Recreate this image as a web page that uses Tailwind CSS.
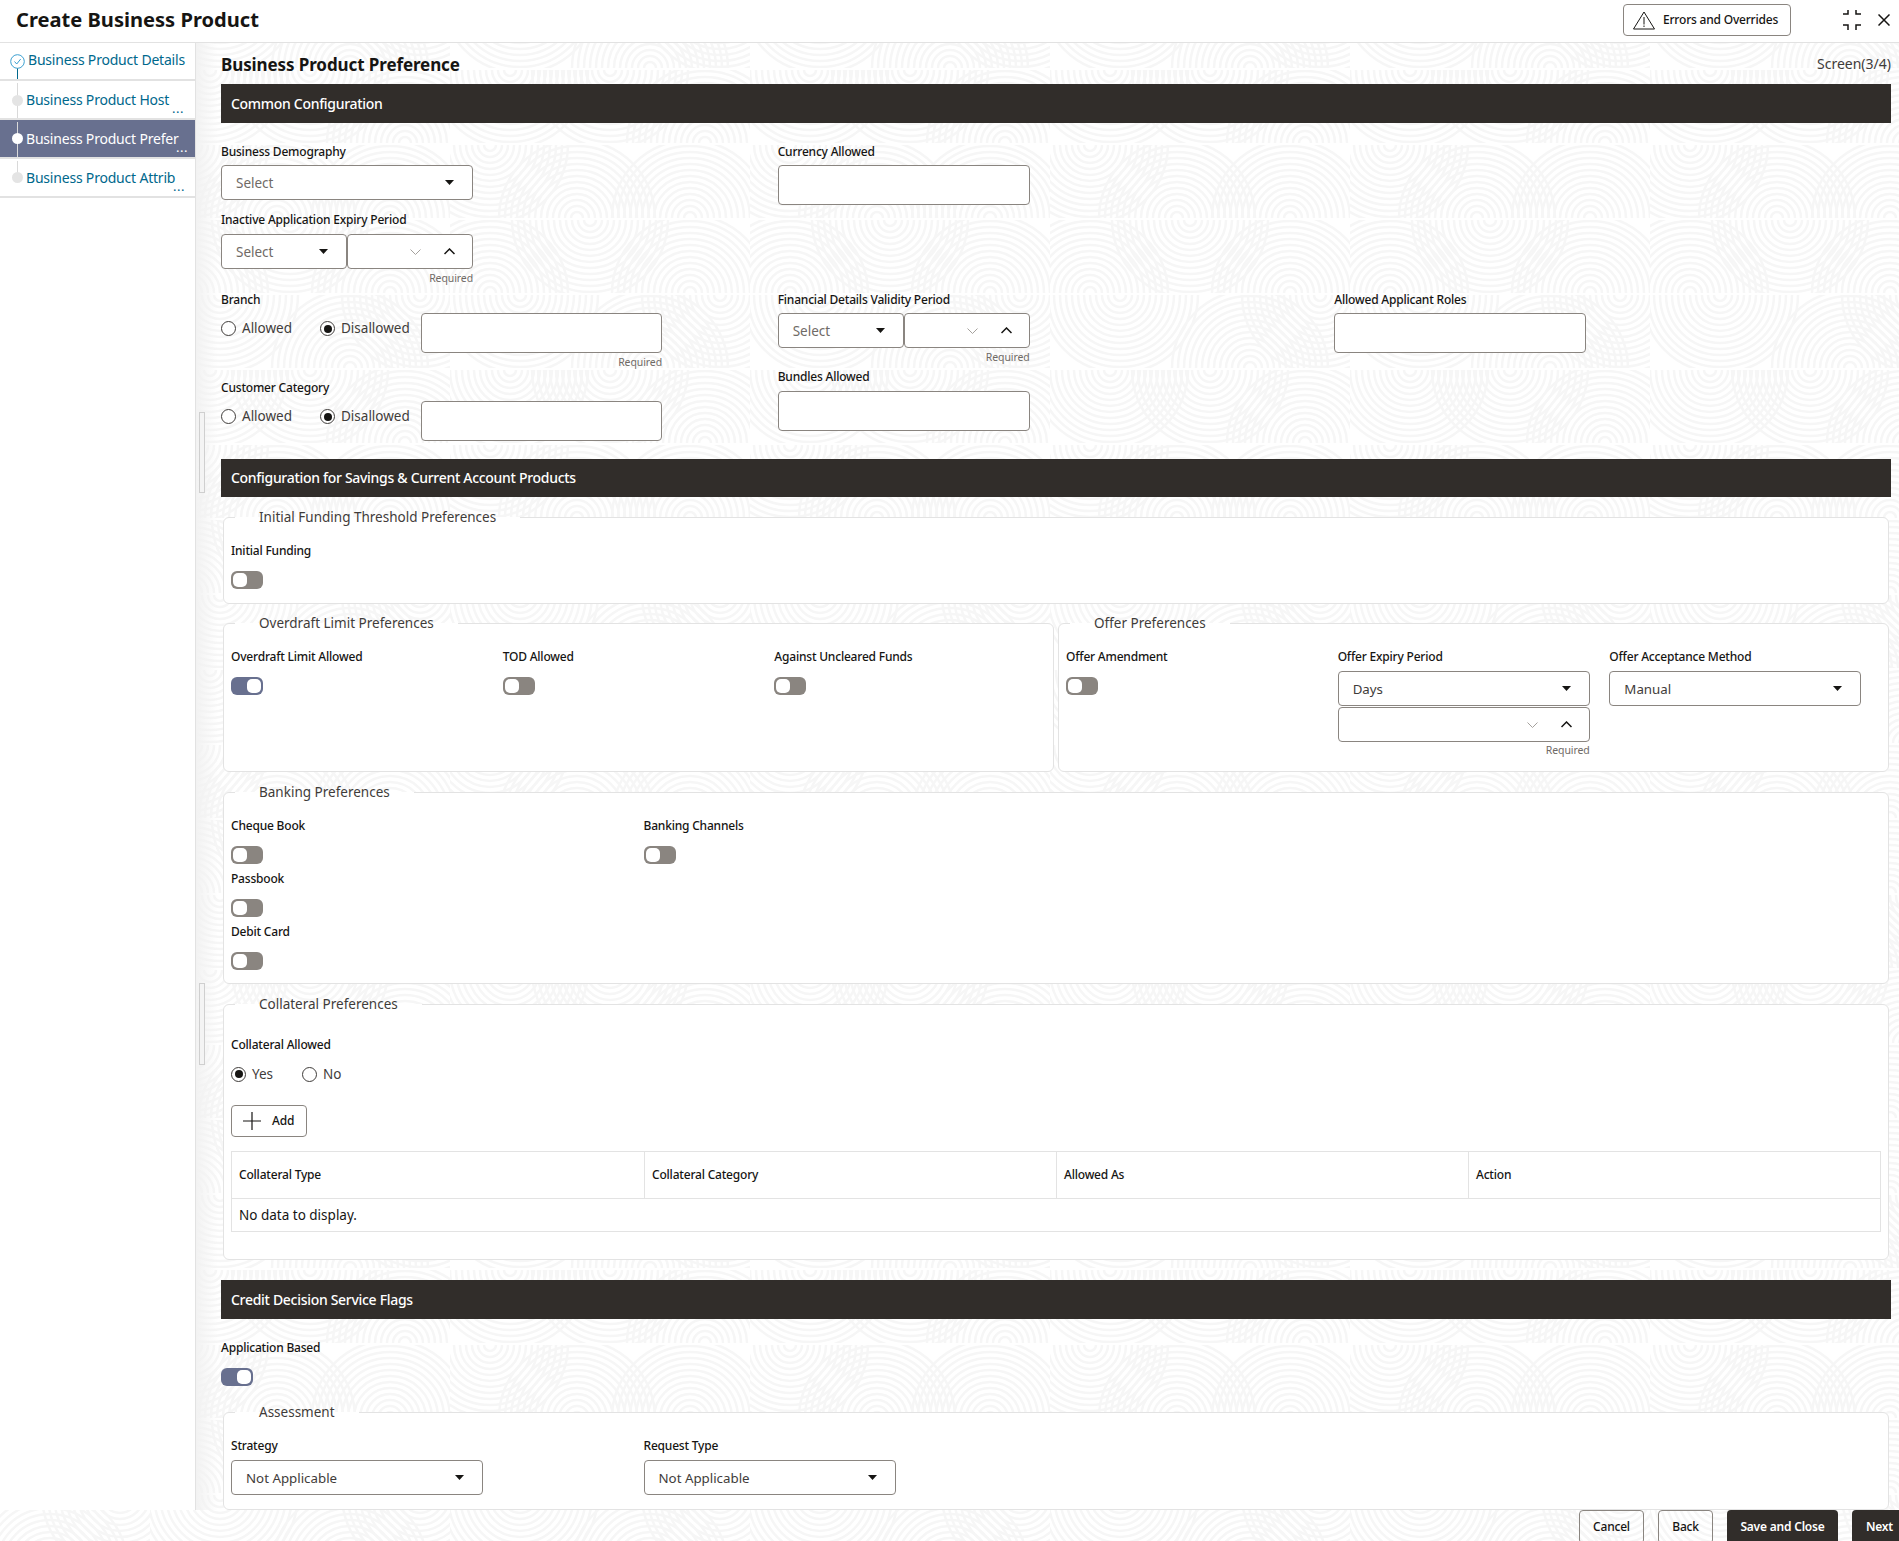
<!DOCTYPE html>
<html lang="en">
  <head>
    <meta charset="UTF-8" />
    <title>Create Business Product</title>
    <script src="https://cdn.jsdelivr.net/npm/@tailwindcss/browser@4"></script>
  </head>
  <body class="bg-white">
    <div class="relative flex h-[1541px] w-full flex-col overflow-hidden bg-white font-['Noto_Sans',sans-serif] text-[#161513]">
      <!-- background pattern -->
      <svg class="absolute inset-0 h-full w-full" xmlns="http://www.w3.org/2000/svg">
        <defs>
          <pattern id="rings" patternUnits="userSpaceOnUse" x="150" y="145" width="300" height="300"></pattern>
        </defs>
        <rect width="100%" height="100%" fill="url(#rings)"></rect>
      </svg>

      <!-- header -->
      <div class="relative flex h-[43px] shrink-0 items-center justify-between border-b border-[#e2e2e2] bg-white pb-[2px] pl-[16px]">
        <p class="text-[20.1px] font-bold">Create Business Product</p>
        <div class="flex items-center">
          <button class="flex h-[32px] w-[168px] items-center rounded-[4px] border border-[#8a8580] pl-[9px] text-[12px] font-medium tracking-[-0.2px]">
            <svg class="mr-[8px]" width="22" height="19" viewBox="0 0 22 19" fill="none" stroke="#161513" stroke-width="1"><path d="M11 1 21.500 18H.5Z" stroke-linejoin="round" /><path d="M11 6v7.500M11 14.500v1.500" /></svg>
            Errors and Overrides
          </button>
          <svg class="ml-[51px]" width="20" height="20" viewBox="0 0 20 20" fill="none" stroke="#161513" stroke-width="1.500"><path d="M1 4h5V0M19 4h-5V0M1 15h5v5M19 15h-5v5" /></svg>
          <svg class="ml-[16px] mr-[9px]" width="12" height="12" viewBox="0 0 12 12" fill="none" stroke="#161513" stroke-width="1.500"><path d="M.500.500l11 11M11.500.500l-11 11" /></svg>
        </div>
      </div>

      <div class="relative flex h-[1467px] shrink-0">
        <!-- sidebar -->
        <div class="h-full w-[196px] shrink-0 border-r border-[#e2e2e2] bg-white text-[14px] tracking-[-0.2px] text-[#00688c]">
          <div class="relative h-[38px] border-b-2 border-[#e2e2e2]">
            <svg class="absolute left-[10px] top-[11px]" width="15" height="25" viewBox="0 0 15 25" fill="none"><circle cx="7.500" cy="7.500" r="6.800" stroke="#3a9fd0" /><path d="M4.500 7.500l2.200 2.500 4-5" stroke="#3a9fd0" /><path d="M7.500 14.500V25" stroke="#00688c" /></svg>
            <span class="absolute left-[28px] top-[6px] whitespace-nowrap">Business Product Details</span>
          </div>
          <div class="relative h-[39px] border-b-2 border-[#e2e2e2]">
            <div class="absolute bottom-[0px] left-[17px] top-[2px] w-px bg-[#d9d9d9]"></div>
            <div class="absolute left-[12px] top-[14px] size-[11px] rounded-full bg-[#e4e4e4]"></div>
            <span class="absolute left-[26px] top-[8px] whitespace-nowrap">Business Product Host</span>
            <span class="absolute left-[172px] top-[18px] text-[13px] tracking-[0.5px]">...</span>
          </div>
          <div class="relative h-[39px] border-b-2 border-[#e2e2e2] bg-[#68708f] text-white">
            <div class="absolute bottom-[0px] left-[17px] top-[2px] w-px bg-[#d9d9d9]"></div>
            <div class="absolute left-[12px] top-[13px] size-[11px] rounded-full bg-white"></div>
            <span class="absolute left-[26px] top-[8px] whitespace-nowrap">Business Product Prefer</span>
            <span class="absolute left-[176px] top-[18px] text-[13px] tracking-[0.5px]">...</span>
          </div>
          <div class="relative h-[39px] border-b-2 border-[#e2e2e2]">
            <div class="absolute bottom-[16px] left-[17px] top-[2px] w-px bg-[#d9d9d9]"></div>
            <div class="absolute left-[12px] top-[13px] size-[11px] rounded-full bg-[#e4e4e4]"></div>
            <span class="absolute left-[26px] top-[8px] whitespace-nowrap">Business Product Attrib</span>
            <span class="absolute left-[173px] top-[18px] text-[13px] tracking-[0.5px]">...</span>
          </div>
        </div>

        <!-- main -->
        <div class="relative min-w-0 flex-1 overflow-hidden pl-[25px] pr-[8px]">
          <div class="absolute inset-y-0 left-0 w-[22px] bg-gradient-to-r from-[#f2f2f2] to-transparent"></div>
          <div class="absolute left-[3px] top-[369px] h-[81px] w-[6px] border border-[#cfcfcf] bg-[#f4f4f4]"></div>
          <div class="absolute left-[3px] top-[940px] h-[82px] w-[6px] border border-[#cfcfcf] bg-[#f4f4f4]"></div>

          <div class="relative">
            <div class="flex h-[41px] items-center justify-between">
              <p class="pt-[3px] text-[17px] font-bold tracking-[-0.1px]">Business Product Preference</p>
              <p class="text-[14px] text-[#3f3c3a]">Screen(3/4)</p>
            </div>

            <!-- common configuration -->
            <div class="flex h-[39px] items-center bg-[#312d2a] pl-[10px] text-[14px] font-medium tracking-[-0.3px] text-white">Common Configuration</div>
            <div class="grid h-[336px] grid-cols-3">
              <div class="relative pt-[20px]">
                <label class="block h-[18px] text-[12px] font-medium leading-[18px] tracking-[-0.2px]">Business Demography</label>
                <div class="mt-[4px] flex h-[35px] w-[252px] items-center justify-between rounded-[4px] border border-[#8a8580] bg-white pl-[14px] pr-[18px] pt-[2px] text-[13.5px] text-[#6f6a66]">
                  Select
                  <svg class="mb-[2px]" width="9" height="5" viewBox="0 0 9 5"><path d="M0 0h9L4.500 5Z" fill="#161513" /></svg>
                </div>
                <label class="mt-[11px] block h-[18px] text-[12px] font-medium leading-[18px] tracking-[-0.2px]">Inactive Application Expiry Period</label>
                <div class="mt-[5px] flex w-[252px]">
                  <div class="flex h-[35px] w-[126px] items-center justify-between rounded-[4px] border border-[#8a8580] bg-white pl-[14px] pr-[18px] pt-[2px] text-[13.5px] text-[#6f6a66]">
                    Select
                    <svg class="mb-[2px]" width="9" height="5" viewBox="0 0 9 5"><path d="M0 0h9L4.500 5Z" fill="#161513" /></svg>
                  </div>
                  <div class="flex h-[35px] w-[126px] items-center justify-end rounded-[4px] border border-[#8a8580] bg-white pr-[17px]">
                    <svg width="11" height="6" viewBox="0 0 11 6" fill="none" stroke="#a5a19d"><path d="M.500.500l5 5 5-5" /></svg>
                    <svg class="ml-[23px]" width="11" height="7" viewBox="0 0 11 7" fill="none" stroke="#161513" stroke-width="1.500"><path d="M.500 6l5-5 5 5" /></svg>
                  </div>
                </div>
                <p class="mt-[2px] h-[14px] w-[252px] text-right text-[10.5px] leading-[14px] tracking-[-0.1px] text-[#6f6a66]">Required</p>
                <label class="mt-[6px] block h-[18px] text-[12px] font-medium leading-[18px] tracking-[-0.2px]">Branch</label>
                <div class="mt-[4px] flex items-start text-[13.5px] text-[#3f3c3a]">
                  <div class="flex h-[31px] items-center">
                    <span class="size-[15px] rounded-full border border-[#3f3c3a] bg-white"></span>
                    <span class="ml-[6px] w-[78px]">Allowed</span>
                    <span class="flex size-[15px] items-center justify-center rounded-full border border-[#3f3c3a] bg-white"><span class="size-[8px] rounded-full bg-[#161513]"></span></span>
                    <span class="ml-[6px]">Disallowed</span>
                  </div>
                  <div class="absolute left-[200px] h-[40px] w-[241px] rounded-[4px] border border-[#8a8580] bg-white"></div>
                </div>
                <p class="mt-[11px] h-[14px] w-[441px] text-right text-[10.5px] leading-[14px] tracking-[-0.1px] text-[#6f6a66]">Required</p>
                <label class="mt-[10px] block h-[18px] text-[12px] font-medium leading-[18px] tracking-[-0.2px]">Customer Category</label>
                <div class="mt-[4px] flex items-start text-[13.5px] text-[#3f3c3a]">
                  <div class="flex h-[31px] items-center">
                    <span class="size-[15px] rounded-full border border-[#3f3c3a] bg-white"></span>
                    <span class="ml-[6px] w-[78px]">Allowed</span>
                    <span class="flex size-[15px] items-center justify-center rounded-full border border-[#3f3c3a] bg-white"><span class="size-[8px] rounded-full bg-[#161513]"></span></span>
                    <span class="ml-[6px]">Disallowed</span>
                  </div>
                  <div class="absolute left-[200px] h-[40px] w-[241px] rounded-[4px] border border-[#8a8580] bg-white"></div>
                </div>
              </div>
              <div class="pt-[20px]">
                <label class="block h-[18px] text-[12px] font-medium leading-[18px] tracking-[-0.2px]">Currency Allowed</label>
                <div class="mt-[4px] h-[40px] w-[252px] rounded-[4px] border border-[#8a8580] bg-white"></div>
                <label class="mt-[86px] block h-[18px] text-[12px] font-medium leading-[18px] tracking-[-0.2px]">Financial Details Validity Period</label>
                <div class="mt-[4px] flex w-[252px]">
                  <div class="flex h-[35px] w-[126px] items-center justify-between rounded-[4px] border border-[#8a8580] bg-white pl-[14px] pr-[18px] pt-[2px] text-[13.5px] text-[#6f6a66]">
                    Select
                    <svg class="mb-[2px]" width="9" height="5" viewBox="0 0 9 5"><path d="M0 0h9L4.500 5Z" fill="#161513" /></svg>
                  </div>
                  <div class="flex h-[35px] w-[126px] items-center justify-end rounded-[4px] border border-[#8a8580] bg-white pr-[17px]">
                    <svg width="11" height="6" viewBox="0 0 11 6" fill="none" stroke="#a5a19d"><path d="M.500.500l5 5 5-5" /></svg>
                    <svg class="ml-[23px]" width="11" height="7" viewBox="0 0 11 7" fill="none" stroke="#161513" stroke-width="1.500"><path d="M.500 6l5-5 5 5" /></svg>
                  </div>
                </div>
                <p class="mt-[2px] h-[14px] w-[252px] text-right text-[10.5px] leading-[14px] tracking-[-0.1px] text-[#6f6a66]">Required</p>
                <label class="mt-[4px] block h-[18px] text-[12px] font-medium leading-[18px] tracking-[-0.2px]">Bundles Allowed</label>
                <div class="mt-[5px] h-[40px] w-[252px] rounded-[4px] border border-[#8a8580] bg-white"></div>
              </div>
              <div class="pt-[168px]">
                <label class="block h-[18px] text-[12px] font-medium leading-[18px] tracking-[-0.2px]">Allowed Applicant Roles</label>
                <div class="mt-[4px] h-[40px] w-[252px] rounded-[4px] border border-[#8a8580] bg-white"></div>
              </div>
            </div>

            <!-- savings and current -->
            <div class="flex h-[38px] items-center bg-[#312d2a] pb-[1px] pl-[10px] text-[14px] font-medium tracking-[-0.3px] text-white">Configuration for Savings &amp; Current Account Products</div>

            <fieldset class="mx-[2px] mt-[8px] h-[99px] rounded-[6px] border border-[#e3e3e3] bg-white px-[7px]">
              <legend class="ml-[4px] h-[24px] px-[24px] text-[13.5px] leading-[24px] text-[#3f3c3a]">Initial Funding Threshold Preferences</legend>
              <label class="mt-[13px] block h-[18px] text-[12px] font-medium leading-[18px] tracking-[-0.2px]">Initial Funding</label>
              <div class="mt-[11px] flex h-[18px] w-[32px] items-center rounded-[6px] bg-[#8a8580] px-[2px]"><span class="size-[14px] rounded-[5px] bg-white"></span></div>
            </fieldset>

            <div class="mx-[2px] mt-[7px] grid grid-cols-2 gap-[4px]">
              <fieldset class="h-[161px] rounded-[6px] border border-[#e3e3e3] bg-white px-[7px]">
                <legend class="ml-[4px] h-[24px] px-[24px] text-[13.5px] leading-[24px] text-[#3f3c3a]">Overdraft Limit Preferences</legend>
                <div class="grid grid-cols-3">
                  <div>
                    <label class="mt-[13px] block h-[18px] text-[12px] font-medium leading-[18px] tracking-[-0.2px]">Overdraft Limit Allowed</label>
                    <div class="mt-[11px] flex h-[18px] w-[32px] items-center justify-end rounded-[6px] bg-[#68708f] px-[2px]"><span class="size-[14px] rounded-[5px] bg-white"></span></div>
                  </div>
                  <div>
                    <label class="mt-[13px] block h-[18px] text-[12px] font-medium leading-[18px] tracking-[-0.2px]">TOD Allowed</label>
                    <div class="mt-[11px] flex h-[18px] w-[32px] items-center rounded-[6px] bg-[#8a8580] px-[2px]"><span class="size-[14px] rounded-[5px] bg-white"></span></div>
                  </div>
                  <div>
                    <label class="mt-[13px] block h-[18px] text-[12px] font-medium leading-[18px] tracking-[-0.2px]">Against Uncleared Funds</label>
                    <div class="mt-[11px] flex h-[18px] w-[32px] items-center rounded-[6px] bg-[#8a8580] px-[2px]"><span class="size-[14px] rounded-[5px] bg-white"></span></div>
                  </div>
                </div>
              </fieldset>
              <fieldset class="h-[161px] rounded-[6px] border border-[#e3e3e3] bg-white px-[7px]">
                <legend class="ml-[4px] h-[24px] px-[24px] text-[13.5px] leading-[24px] text-[#3f3c3a]">Offer Preferences</legend>
                <div class="grid grid-cols-3">
                  <div>
                    <label class="mt-[13px] block h-[18px] text-[12px] font-medium leading-[18px] tracking-[-0.2px]">Offer Amendment</label>
                    <div class="mt-[11px] flex h-[18px] w-[32px] items-center rounded-[6px] bg-[#8a8580] px-[2px]"><span class="size-[14px] rounded-[5px] bg-white"></span></div>
                  </div>
                  <div>
                    <label class="mt-[13px] block h-[18px] text-[12px] font-medium leading-[18px] tracking-[-0.2px]">Offer Expiry Period</label>
                    <div class="mt-[5px] flex h-[35px] w-[252px] items-center justify-between rounded-[4px] border border-[#8a8580] bg-white pl-[14px] pr-[18px] pt-[2px] text-[13.3px] text-[#3f3c3a]">
                      Days
                      <svg class="mb-[2px]" width="9" height="5" viewBox="0 0 9 5"><path d="M0 0h9L4.500 5Z" fill="#161513" /></svg>
                    </div>
                    <div class="mt-[1px] flex h-[35px] w-[252px] items-center justify-end rounded-[4px] border border-[#8a8580] bg-white pr-[17px]">
                      <svg width="11" height="6" viewBox="0 0 11 6" fill="none" stroke="#a5a19d"><path d="M.500.500l5 5 5-5" /></svg>
                      <svg class="ml-[23px]" width="11" height="7" viewBox="0 0 11 7" fill="none" stroke="#161513" stroke-width="1.500"><path d="M.500 6l5-5 5 5" /></svg>
                    </div>
                    <p class="mt-[1px] h-[14px] w-[252px] text-right text-[10.5px] leading-[14px] tracking-[-0.1px] text-[#6f6a66]">Required</p>
                  </div>
                  <div>
                    <label class="mt-[13px] block h-[18px] text-[12px] font-medium leading-[18px] tracking-[-0.2px]">Offer Acceptance Method</label>
                    <div class="mt-[5px] flex h-[35px] w-[252px] items-center justify-between rounded-[4px] border border-[#8a8580] bg-white pl-[14px] pr-[18px] pt-[2px] text-[13.3px] text-[#3f3c3a]">
                      Manual
                      <svg class="mb-[2px]" width="9" height="5" viewBox="0 0 9 5"><path d="M0 0h9L4.500 5Z" fill="#161513" /></svg>
                    </div>
                  </div>
                </div>
              </fieldset>
            </div>

            <fieldset class="mx-[2px] mt-[8px] h-[204px] rounded-[6px] border border-[#e3e3e3] bg-white px-[7px]">
              <legend class="ml-[4px] h-[24px] px-[24px] text-[13.5px] leading-[24px] text-[#3f3c3a]">Banking Preferences</legend>
              <div class="grid grid-cols-4">
                <div>
                  <label class="mt-[13px] block h-[18px] text-[12px] font-medium leading-[18px] tracking-[-0.2px]">Cheque Book</label>
                  <div class="mt-[11px] flex h-[18px] w-[32px] items-center rounded-[6px] bg-[#8a8580] px-[2px]"><span class="size-[14px] rounded-[5px] bg-white"></span></div>
                  <label class="mt-[6px] block h-[18px] text-[12px] font-medium leading-[18px] tracking-[-0.2px]">Passbook</label>
                  <div class="mt-[11px] flex h-[18px] w-[32px] items-center rounded-[6px] bg-[#8a8580] px-[2px]"><span class="size-[14px] rounded-[5px] bg-white"></span></div>
                  <label class="mt-[6px] block h-[18px] text-[12px] font-medium leading-[18px] tracking-[-0.2px]">Debit Card</label>
                  <div class="mt-[11px] flex h-[18px] w-[32px] items-center rounded-[6px] bg-[#8a8580] px-[2px]"><span class="size-[14px] rounded-[5px] bg-white"></span></div>
                </div>
                <div>
                  <label class="mt-[13px] block h-[18px] text-[12px] font-medium leading-[18px] tracking-[-0.2px]">Banking Channels</label>
                  <div class="mt-[11px] flex h-[18px] w-[32px] items-center rounded-[6px] bg-[#8a8580] px-[2px]"><span class="size-[14px] rounded-[5px] bg-white"></span></div>
                </div>
              </div>
            </fieldset>

            <fieldset class="mx-[2px] mt-[8px] h-[268px] rounded-[6px] border border-[#e3e3e3] bg-white px-[7px]">
              <legend class="ml-[4px] h-[24px] px-[24px] text-[13.5px] leading-[24px] text-[#3f3c3a]">Collateral Preferences</legend>
              <label class="mt-[20px] block h-[18px] text-[12px] font-medium leading-[18px] tracking-[-0.2px]">Collateral Allowed</label>
              <div class="mt-[10px] flex h-[20px] items-center text-[13.5px] text-[#3f3c3a]">
                <span class="flex size-[15px] items-center justify-center rounded-full border border-[#3f3c3a]"><span class="size-[8px] rounded-full bg-[#161513]"></span></span>
                <span class="ml-[6px] w-[50px]">Yes</span>
                <span class="size-[15px] rounded-full border border-[#3f3c3a]"></span>
                <span class="ml-[6px]">No</span>
              </div>
              <button class="mt-[21px] flex h-[32px] w-[76px] items-center rounded-[4px] border border-[#8a8580] pl-[11px] text-[12px] font-medium tracking-[-0.2px]">
                <svg class="mr-[11px]" width="18" height="18" viewBox="0 0 18 18" fill="none" stroke="#161513" stroke-width="1.200"><path d="M9 0v18M0 9h18" /></svg>
                Add
              </button>
              <div class="mt-[14px] h-[81px] border border-[#e3e3e3] text-[12px] font-medium tracking-[-0.2px]">
                <div class="grid h-[47px] grid-cols-[413px_412px_412px_1fr] border-b border-[#e3e3e3]">
                  <div class="flex items-center border-r border-[#e3e3e3] pl-[7px]">Collateral Type</div>
                  <div class="flex items-center border-r border-[#e3e3e3] pl-[7px]">Collateral Category</div>
                  <div class="flex items-center border-r border-[#e3e3e3] pl-[7px]">Allowed As</div>
                  <div class="flex items-center pl-[7px]">Action</div>
                </div>
                <p class="pl-[7px] pt-[6px] text-[13.5px] font-normal tracking-normal">No data to display.</p>
              </div>
            </fieldset>

            <!-- credit decision -->
            <div class="mt-[20px] flex h-[39px] items-center bg-[#312d2a] pl-[10px] text-[14px] font-medium tracking-[-0.3px] text-white">Credit Decision Service Flags</div>
            <label class="mt-[20px] block h-[18px] text-[12px] font-medium leading-[18px] tracking-[-0.2px]">Application Based</label>
            <div class="mt-[11px] flex h-[18px] w-[32px] items-center justify-end rounded-[6px] bg-[#68708f] px-[2px]"><span class="size-[14px] rounded-[5px] bg-white"></span></div>

            <fieldset class="mx-[2px] mt-[14px] h-[110px] rounded-[6px] border border-[#e3e3e3] bg-white px-[7px]">
              <legend class="ml-[4px] h-[24px] px-[24px] text-[13.5px] leading-[24px] text-[#3f3c3a]">Assessment</legend>
              <div class="grid grid-cols-4">
                <div>
                  <label class="mt-[13px] block h-[18px] text-[12px] font-medium leading-[18px] tracking-[-0.2px]">Strategy</label>
                  <div class="mt-[5px] flex h-[35px] w-[252px] items-center justify-between rounded-[4px] border border-[#8a8580] bg-white pl-[14px] pr-[18px] pt-[2px] text-[13.3px] text-[#3f3c3a]">
                    Not Applicable
                    <svg class="mb-[2px]" width="9" height="5" viewBox="0 0 9 5"><path d="M0 0h9L4.500 5Z" fill="#161513" /></svg>
                  </div>
                </div>
                <div>
                  <label class="mt-[13px] block h-[18px] text-[12px] font-medium leading-[18px] tracking-[-0.2px]">Request Type</label>
                  <div class="mt-[5px] flex h-[35px] w-[252px] items-center justify-between rounded-[4px] border border-[#8a8580] bg-white pl-[14px] pr-[18px] pt-[2px] text-[13.3px] text-[#3f3c3a]">
                    Not Applicable
                    <svg class="mb-[2px]" width="9" height="5" viewBox="0 0 9 5"><path d="M0 0h9L4.500 5Z" fill="#161513" /></svg>
                  </div>
                </div>
              </div>
            </fieldset>
          </div>
        </div>
      </div>

      <!-- footer -->
      <div class="relative flex h-[34px] shrink-0 justify-end gap-[14px] text-[12px] font-medium tracking-[-0.2px]">
        <button class="h-[34px] w-[65px] rounded-[4px] border border-[#8a8580]">Cancel</button>
        <button class="h-[34px] w-[55px] rounded-[4px] border border-[#8a8580]">Back</button>
        <button class="h-[34px] w-[111px] rounded-[4px] bg-[#312d2a] font-semibold text-white">Save and Close</button>
        <button class="mr-[-8px] h-[34px] w-[55px] shrink-0 rounded-[4px] bg-[#312d2a] font-semibold text-white">Next</button>
      </div>
    </div>
    <script>
      // concentric rings for the page background, one clip per 75px row
      const rows = [
        [[127, 73], [40, 0], [240, 73]],
        [[40, 73], [240, 73], [140, 0]],
        [[70, 0], [200, 73], [270, 0]],
        [[255, 73], [60, 0], [160, 0]],
      ];
      const ns = "http://www.w3.org/2000/svg";
      const pattern = document.getElementById("rings");
      rows.forEach((row, idx) => {
        const clip = document.createElementNS(ns, "svg");
        clip.setAttribute("y", idx * 75);
        clip.setAttribute("width", 300);
        clip.setAttribute("height", 73);
        row.forEach(([cx, cy]) => {
          for (let r = 6; r <= 78; r += 6) {
            const circle = document.createElementNS(ns, "circle");
            circle.setAttribute("cx", cx);
            circle.setAttribute("cy", cy);
            circle.setAttribute("r", r);
            circle.setAttribute("fill", "none");
            circle.setAttribute("stroke", "#f6f6f6");
            circle.setAttribute("stroke-width", 2.5);
            clip.appendChild(circle);
          }
        });
        pattern.appendChild(clip);
      });
    </script>
  </body>
</html>
